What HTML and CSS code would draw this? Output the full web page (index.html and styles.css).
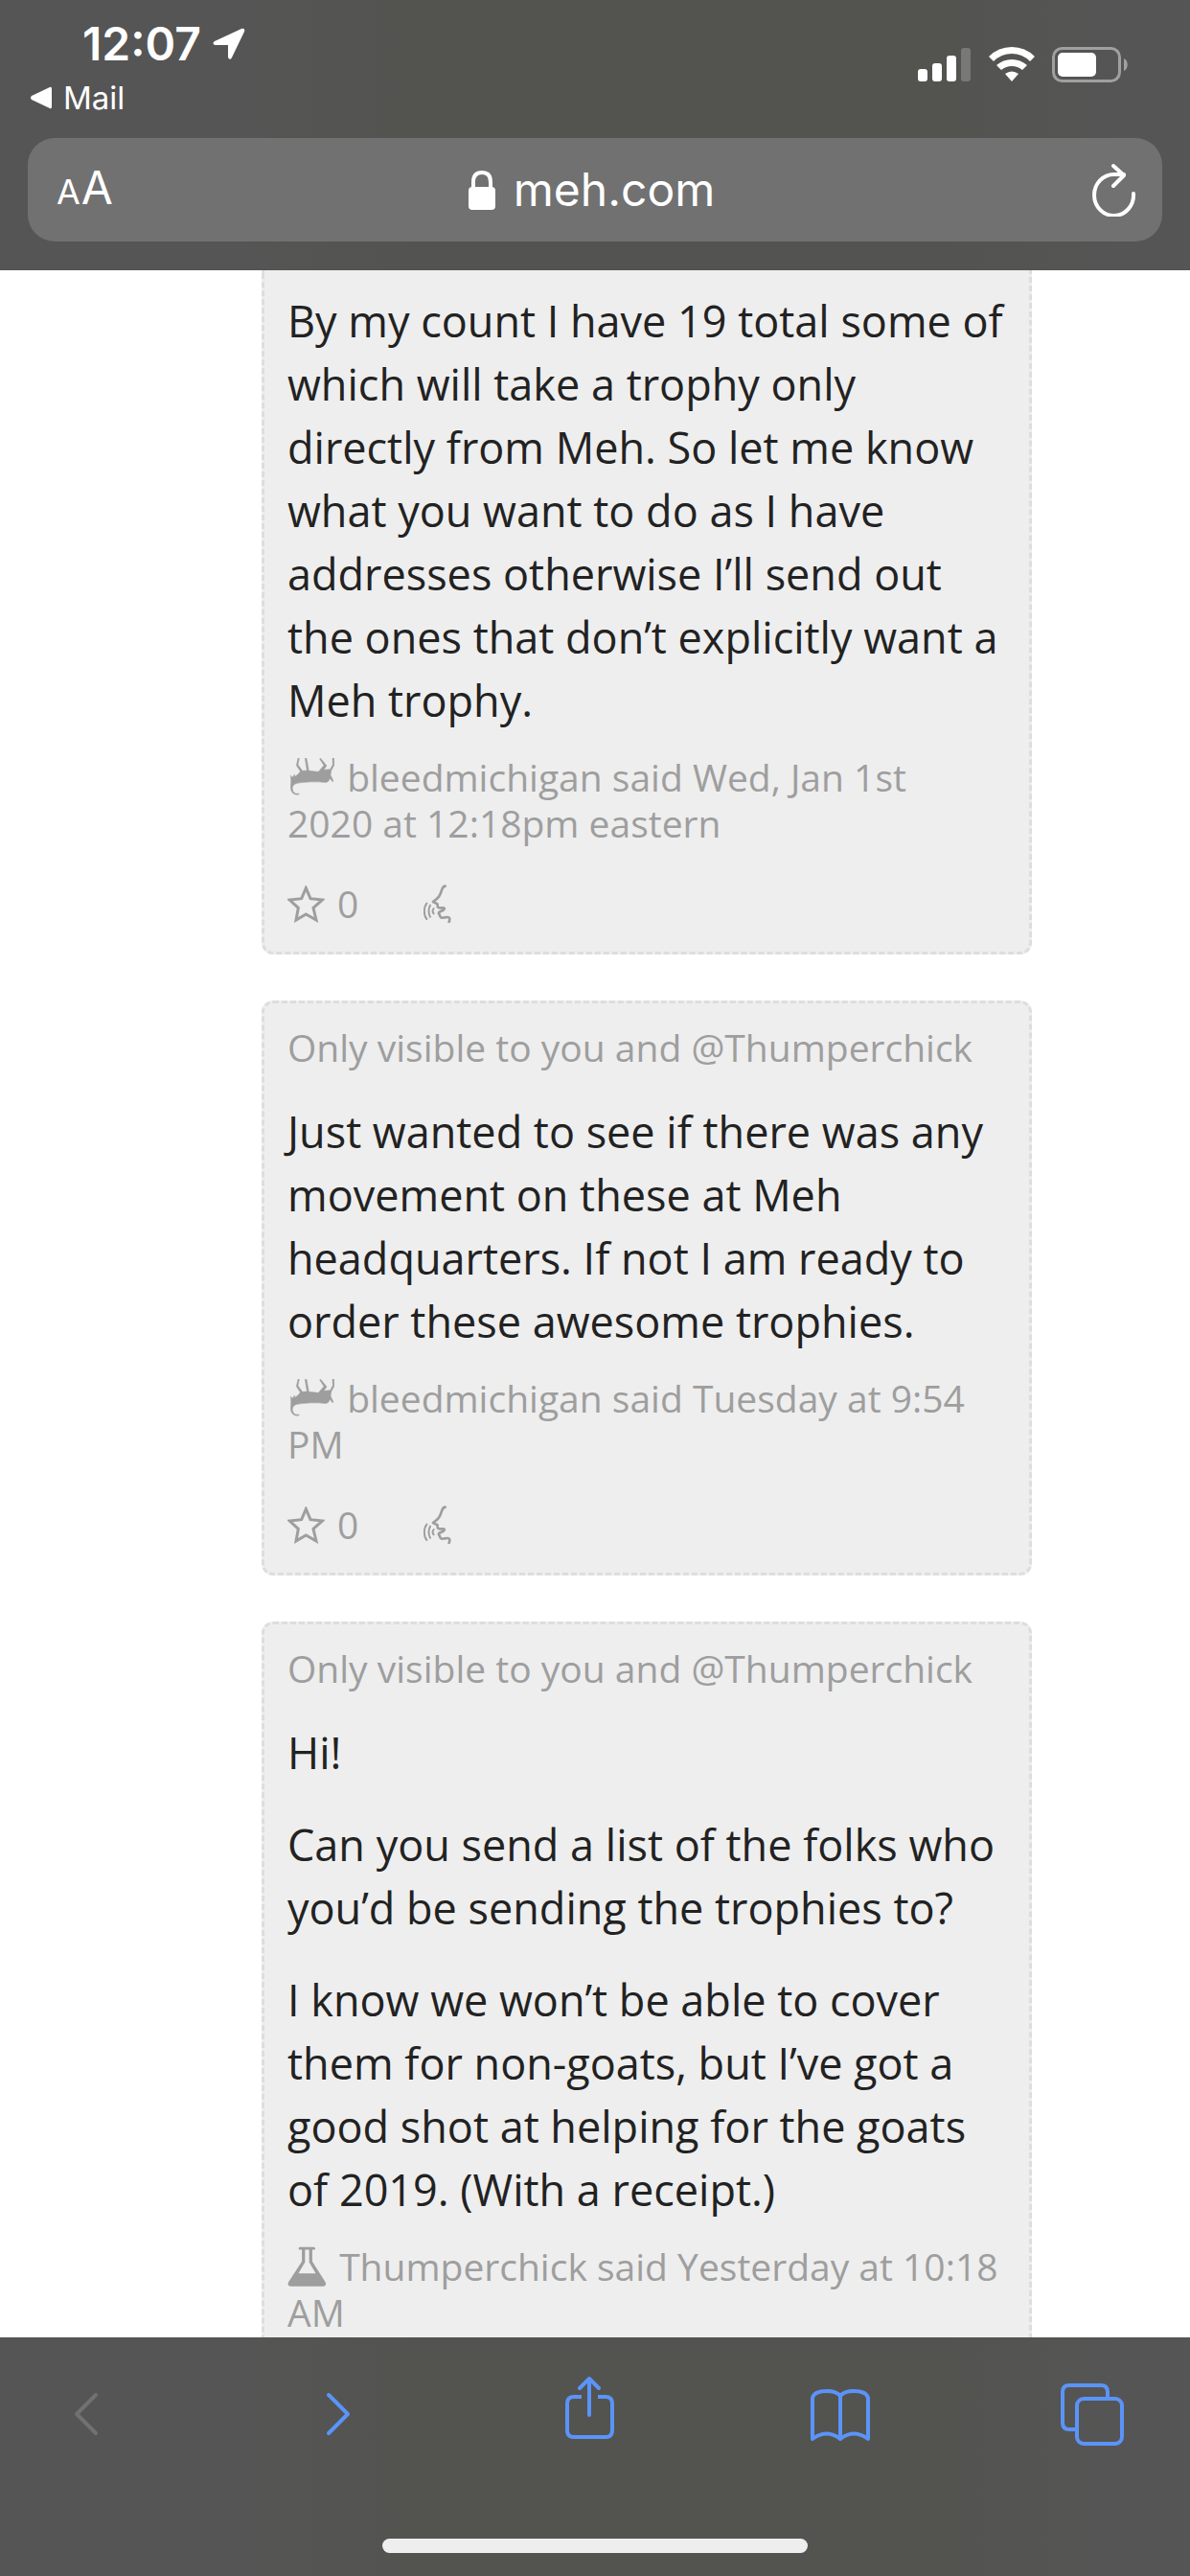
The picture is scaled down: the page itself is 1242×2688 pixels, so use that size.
FILE: index.html
```
<!DOCTYPE html>
<html lang="en">
  <head>
    <meta charset="utf-8">
    <title>meh.com</title>
    <meta name="viewport" content="width=device-width, initial-scale=1">
    <link rel="stylesheet" href="styles.css">
  </head>
  <body>
    <!-- shared icons -->
    <svg class="sprite" aria-hidden="true">
      <symbol id="goat" viewBox="12 18 147 123">
        <path fill="currentColor" stroke="currentColor" stroke-width="1.500" d="M45 18l4 1-4 20 14 19 14-1-6-38h5l7 39 30 3 17-20-13-20 3-2 19 23-9 13 20-2 8-15-1-20 5-1 1 22-10 19-2 13 9 19-3 2-8-11c-4 12-9 14-19 13-26-3-61-1-84 3-10 3-16 10-14 19 2 10 8 15 21 13l-2 3c-13 3-21-4-24-15-2-10 1-21 0-34l-1-11 3 6 7-3 1-6 3 7 12-10 4-7-12-18z"/>
      </symbol>
      <symbol id="flask" viewBox="14 18 123 128">
        <path fill="currentColor" fill-rule="evenodd" d="M53 20h44c6 0 6 9 0 9h-5v37l41 65c5 8 1 14-7 14H24c-8 0-12-6-7-14l42-65V29h-6c-6 0-6-9 0-9zM69 29v39l-21 36h55L82 68V29z"/>
      </symbol>
      <symbol id="star" viewBox="12 34 117 117">
        <path fill="none" stroke="currentColor" stroke-width="9" d="M70 42l14 33 37 4-28 25 9 38-32-18-31 18 7-38-27-25 37-4z"/>
      </symbol>
      <symbol id="speak" viewBox="437 22 87 120">
        <g fill="none" stroke="currentColor" stroke-width="8" stroke-linecap="round" stroke-linejoin="round">
          <path d="M505 27c-11 0-9 14-18 30-5 10-10 12-20 19l14 7c-1 10 1 13 13 12 10-1 11 2 4 8-10 4-17 5-11 13 2 10 7 12 17 9 13-3 18 1 13 14"/>
          <path stroke-width="6" d="M447 81c-10 13-10 37 0 49M458 87c-6 10-6 26 0 36M469 97c-4 5-4 11 0 16"/>
        </g>
      </symbol>
    </svg>

    <header class="browser-top">
      <div class="status">
        <div>
          <div class="clock">
            <span>12:07</span>
            <svg width="34" height="34" viewBox="0 0 34 34"><path fill="#fff" d="M30 1c2-1 4 0 3 3L20 31c-1 3-4 2-4-1V18H3c-3 0-3-3-1-4z"/></svg>
          </div>
          <button class="back-to-app">
            <svg width="22" height="24" viewBox="0 0 22 24"><path fill="#fff" d="M20 1q2-1 2 2v18q0 3-2 2L1 14q-2-2 0-4z"/></svg>
            Mail
          </button>
        </div>
        <div class="indicators">
          <svg width="56" height="36" viewBox="0 0 56 36" fill="#fff">
            <rect y="23" width="10" height="13" rx="3"/>
            <rect x="15" y="17" width="10" height="19" rx="3"/>
            <rect x="30" y="9" width="10" height="27" rx="3"/>
            <rect x="45" y="1" width="10" height="35" rx="3" opacity=".22"/>
          </svg>
          <svg width="48" height="36" viewBox="0 0 48 36" fill="#fff">
            <path d="M0 10Q10 0 24 0t24 10l-5 5Q35 7 24 7T5 15zM8 19q7-6 16-6t16 6l-5 5q-5-4-11-4t-11 4zM17 28q7-5 14 0l-7 8z"/>
          </svg>
          <svg width="80" height="37" viewBox="0 0 80 37">
            <rect x="1.500" y="1.500" width="69" height="34" rx="9" fill="none" stroke="#a0a0a0" stroke-width="3"/>
            <rect x="6" y="6" width="40" height="25" rx="5" fill="#fff"/>
            <path d="M75 12c5 2 5 11 0 13z" fill="#a0a0a0"/>
          </svg>
        </div>
      </div>
      <div class="address">
        <button class="text-size" aria-label="Text size"><small>A</small>A</button>
        <button class="url">
          <svg width="28" height="41" viewBox="0 0 28 41"><rect y="17" width="28" height="24" rx="4" fill="#fff"/><path d="M5 19v-7q0-10 9-10t9 10v7" fill="none" stroke="#fff" stroke-width="4"/></svg>
          meh.com
        </button>
        <button class="reload" aria-label="Reload">
          <svg width="46" height="56" viewBox="0 0 46 56" fill="none" stroke="#fff" stroke-width="4" stroke-linecap="round" stroke-linejoin="round"><path d="M43 32a20.500 21.500 0 1 1-20-20h10M22 3l11 10-11 11"/></svg>
        </button>
      </div>
    </header>

    <main class="comments">
      <article class="whisper continued">
        <p>By my count I have 19 total some of which will take a trophy only directly from Meh. So let me know what you want to do as I have addresses otherwise I’ll send out the ones that don’t explicitly want a Meh trophy.</p>
        <div class="meta"><svg class="goat"><use href="#goat"/></svg> <a href="#">bleedmichigan</a> said Wed, Jan 1st<br>2020 at 12:18pm eastern</div>
        <div class="actions">
          <button class="vote"><svg class="star"><use href="#star"/></svg>0</button>
          <button aria-label="Reply"><svg class="speak"><use href="#speak"/></svg></button>
        </div>
      </article>

      <article class="whisper">
        <div class="visibility">Only visible to you and <a href="#">@Thumperchick</a></div>
        <p>Just wanted to see if there was any movement on these at Meh headquarters. If not I am ready to order these awesome trophies.</p>
        <div class="meta"><svg class="goat"><use href="#goat"/></svg> <a href="#">bleedmichigan</a> said Tuesday at 9:54<br>PM</div>
        <div class="actions">
          <button class="vote"><svg class="star"><use href="#star"/></svg>0</button>
          <button aria-label="Reply"><svg class="speak"><use href="#speak"/></svg></button>
        </div>
      </article>

      <article class="whisper">
        <div class="visibility">Only visible to you and <a href="#">@Thumperchick</a></div>
        <p>Hi!</p>
        <p>Can you send a list of the folks who you’d be sending the trophies to?</p>
        <p>I know we won’t be able to cover them for non-goats, but I’ve got a good shot at helping for the goats of 2019. (With a receipt.)</p>
        <div class="meta"><svg class="flask"><use href="#flask"/></svg> <a href="#">Thumperchick</a> said Yesterday at 10:18<br>AM</div>
      </article>
    </main>

    <footer class="browser-bottom">
      <nav class="toolbar">
        <button aria-label="Back" disabled><svg viewBox="0 0 72 72"><path d="M47 19L27 39l20 20"/></svg></button>
        <button aria-label="Forward"><svg viewBox="0 0 72 72"><path d="M27 19l20 20-20 20"/></svg></button>
        <button aria-label="Share"><svg viewBox="0 0 72 72"><path stroke-linecap="butt" d="M28 21h-8q-7 0-7 7v28q0 7 7 7h33q7 0 7-7V28q0-7-7-7h-8"/><path d="M36 40V3M26 12L36 2l10 10"/></svg></button>
        <button aria-label="Bookmarks"><svg viewBox="0 0 72 72"><path d="M36 20v45q-14-11-29 0V22q2-7 15-7 10 0 14 5 4-5 14-5 13 0 15 7v43q-15-11-29 0"/></svg></button>
        <button aria-label="Tabs"><svg viewBox="0 0 72 72"><path stroke-linecap="butt" d="M18 55h-6q-7 0-7-7V16q0-7 7-7h33q7 0 7 7v6"/><rect x="20" y="23" width="47" height="47" rx="7"/></svg></button>
      </nav>
      <div class="home-indicator"></div>
    </footer>
  </body>
</html>
```
FILE: styles.css
```
* {
  box-sizing: border-box;
}

body {
  height: 100vh;
  margin: 0;
  display: flex;
  flex-direction: column;
  overflow: hidden;
  background: #fff;
  color: #222;
  font-family: "Open Sans", "Noto Sans", sans-serif;
  font-size: 45px;
  line-height: 66px;
}

svg {
  flex: none;
}

button {
  display: flex;
  align-items: center;
  margin: 0;
  padding: 0;
  border: 0;
  background: none;
  color: inherit;
  font: inherit;
  cursor: pointer;
}

a {
  color: inherit;
  text-decoration: none;
}

.sprite {
  display: none;
}

/* browser chrome */
.browser-top, .browser-bottom {
  flex: none;
  background: linear-gradient(90deg, #555 0%, #555 20%, #535350 34%, #535350 80%, #555 94%, #555 100%);
  color: #fff;
  font-family: Inter, "Liberation Sans", sans-serif;
}

.browser-top {
  padding: 17px 29px 30px;
}

.status {
  display: flex;
  justify-content: space-between;
  margin-bottom: 22px;
}

.clock {
  display: flex;
  align-items: center;
  gap: 12px;
  padding-left: 57px;
  font-size: 48px;
  font-weight: 600;
  line-height: 58px;
}

.back-to-app {
  gap: 12px;
  margin-top: 7px;
  padding-left: 3px;
  font-size: 33px;
  line-height: 40px;
}

.indicators {
  display: flex;
  align-items: flex-start;
  gap: 18px;
  padding: 32px 35px 0 0;
}

.address {
  display: grid;
  grid-template-columns: 1fr auto 1fr;
  align-items: center;
  height: 108px;
  padding: 0 27px 0 30px;
  border-radius: 28px;
  background: #717171;
  font-size: 48px;
  line-height: 58px;
}

.text-size {
  align-items: baseline;
  gap: 1px;
  justify-self: start;
}

.text-size small {
  font-size: 36px;
}

.url {
  gap: 19px;
  padding-right: 10px;
}

.reload {
  justify-self: end;
}

/* comments */
.comments {
  flex: 1;
  min-height: 0;
  overflow: hidden;
  padding: 0 165px 0 273px;
}

.whisper {
  margin-bottom: 48px;
  padding: 22px 24px 26px;
  border: 3px dashed #ddd;
  border-radius: 12px;
  background: #eee;
}

.continued {
  padding-top: 20px;
  border-top: 0;
  border-top-left-radius: 0;
  border-top-right-radius: 0;
}

.whisper p {
  margin: 0 0 30px;
}

.visibility, .meta, .actions {
  color: #9e9e9e;
  font-size: 39px;
  line-height: 48px;
}

.visibility {
  margin-bottom: 31px;
}

.whisper .meta {
  margin-top: -7px;
}

.goat, .flask {
  margin-right: 3px;
  vertical-align: -6px;
}

.goat {
  width: 49px;
  height: 41px;
}

.flask {
  width: 41px;
  height: 42px;
}

.actions {
  display: flex;
  gap: 68px;
  margin-top: 36px;
}

.vote {
  gap: 13px;
}

.star {
  width: 39px;
  height: 39px;
}

.speak {
  width: 29px;
  height: 40px;
}

/* bottom toolbar */
.browser-bottom {
  padding-top: 41px;
  padding-bottom: 24px;
}

.toolbar {
  display: flex;
  justify-content: space-between;
  padding: 0 66px 0 53px;
}

.toolbar svg {
  width: 72px;
  height: 72px;
  fill: none;
  stroke: #5b94f8;
  stroke-width: 4;
  stroke-linecap: round;
  stroke-linejoin: round;
}

.toolbar button:disabled svg {
  stroke: #717171;
}

.home-indicator {
  width: 444px;
  height: 15px;
  margin: 97px auto 0;
  border-radius: 8px;
  background: #eee;
}
```
